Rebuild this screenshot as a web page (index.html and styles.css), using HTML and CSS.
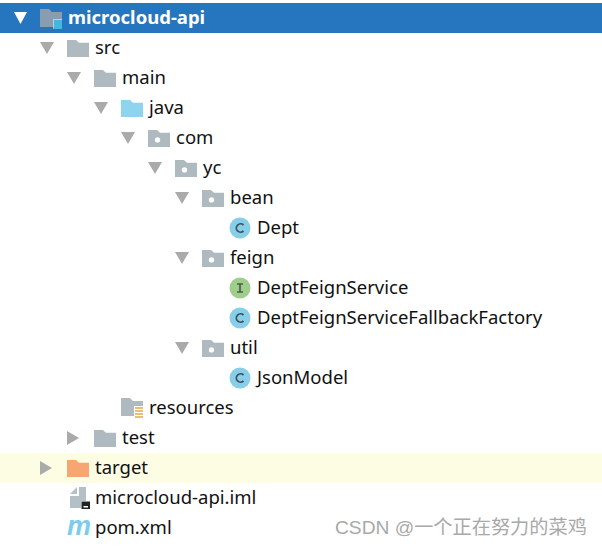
FILE: index.html
```html
<!DOCTYPE html>
<html lang="en">
<head>
<meta charset="utf-8">
<title>microcloud-api</title>
<link rel="stylesheet" href="styles.css">
</head>
<body>
<svg class="defs" aria-hidden="true">
  <symbol id="down" viewBox="0 0 14 12" preserveAspectRatio="none"><path d="M0 0H14L7 12Z"/></symbol>
  <symbol id="right" viewBox="0 0 12 14"><path d="M0 0V14L12 7Z"/></symbol>
  <symbol id="folder" viewBox="0 0 22 18" preserveAspectRatio="none"><path d="M0 0H9L12 3H22V18H0Z"/></symbol>
  <symbol id="package" viewBox="0 0 22 18" preserveAspectRatio="none"><path d="M0 0H9L12 3H22V18H0Z"/><circle cx="9.500" cy="10.500" r="2.700" fill="#fff"/></symbol>
  <symbol id="module" viewBox="0 0 22 20"><path fill="#8a9cb0" d="M0 0H9L12 3H22V18H0Z"/><rect x="13" y="10" width="9" height="10" fill="#fff" opacity=".5"/><rect x="14" y="11" width="9" height="9" fill="#45b5e2"/></symbol>
  <symbol id="res" viewBox="0 0 22 20"><path fill="#afb9c0" d="M0 0H9L12 3H22V18H0Z"/><rect x="13" y="8" width="9" height="12" fill="#fff"/><path fill="none" stroke="#e2a94e" stroke-width="1.6" d="M14 10H22M14 13H22M14 16H22M14 19H22"/></symbol>
  <symbol id="cls" viewBox="0 0 22 22"><circle cx="11" cy="11" r="10.500" fill="#87cfe9"/><path fill="none" stroke="#3f5060" stroke-width="1.8" d="M14.500 8A4.200 4.200 0 1 0 14.500 14"/></symbol>
  <symbol id="ifc" viewBox="0 0 22 22"><circle cx="11" cy="11" r="10.500" fill="#9fce8c"/><path fill="none" stroke="#4b5f45" stroke-width="1.7" d="M8 7H14M8 15H14M11 7V15"/></symbol>
  <symbol id="iml" viewBox="0 0 20 22"><path fill="#b4bfc6" d="M7 0V7H0Z"/><path fill="#b4bfc6" d="M9 0H16V21H0V9H9Z"/><rect x="11" y="14" width="9" height="9" fill="#fff"/><rect x="11.500" y="14.500" width="8.500" height="8.500" fill="#232323"/><rect x="13.500" y="19" width="4.500" height="1.500" fill="#fff"/></symbol>
</svg>

<main class="tree">
  <div class="row selected d0"><svg class="arrow"><use href="#down"/></svg><svg class="icon module"><use href="#module"/></svg><span class="label">microcloud-api</span></div>
  <div class="row d1"><svg class="arrow"><use href="#down"/></svg><svg class="icon gray"><use href="#folder"/></svg><span class="label">src</span></div>
  <div class="row d2"><svg class="arrow"><use href="#down"/></svg><svg class="icon gray"><use href="#folder"/></svg><span class="label">main</span></div>
  <div class="row d3"><svg class="arrow"><use href="#down"/></svg><svg class="icon blue"><use href="#folder"/></svg><span class="label">java</span></div>
  <div class="row d4"><svg class="arrow"><use href="#down"/></svg><svg class="icon gray"><use href="#package"/></svg><span class="label">com</span></div>
  <div class="row d5"><svg class="arrow"><use href="#down"/></svg><svg class="icon gray"><use href="#package"/></svg><span class="label">yc</span></div>
  <div class="row d6"><svg class="arrow"><use href="#down"/></svg><svg class="icon gray"><use href="#package"/></svg><span class="label">bean</span></div>
  <div class="row d7"><span class="arrow"></span><svg class="icon round"><use href="#cls"/></svg><span class="label">Dept</span></div>
  <div class="row d6"><svg class="arrow"><use href="#down"/></svg><svg class="icon gray"><use href="#package"/></svg><span class="label">feign</span></div>
  <div class="row d7"><span class="arrow"></span><svg class="icon round"><use href="#ifc"/></svg><span class="label">DeptFeignService</span></div>
  <div class="row d7"><span class="arrow"></span><svg class="icon round"><use href="#cls"/></svg><span class="label">DeptFeignServiceFallbackFactory</span></div>
  <div class="row d6"><svg class="arrow"><use href="#down"/></svg><svg class="icon gray"><use href="#package"/></svg><span class="label">util</span></div>
  <div class="row d7"><span class="arrow"></span><svg class="icon round"><use href="#cls"/></svg><span class="label">JsonModel</span></div>
  <div class="row d3"><span class="arrow"></span><svg class="icon resource"><use href="#res"/></svg><span class="label">resources</span></div>
  <div class="row d2"><svg class="arrow side"><use href="#right"/></svg><svg class="icon gray"><use href="#folder"/></svg><span class="label">test</span></div>
  <div class="row excluded d1"><svg class="arrow side"><use href="#right"/></svg><svg class="icon orange"><use href="#folder"/></svg><span class="label">target</span></div>
  <div class="row d1"><span class="arrow"></span><svg class="icon file"><use href="#iml"/></svg><span class="label">microcloud-api.iml</span></div>
  <div class="row d1"><span class="arrow"></span><span class="icon maven">m</span><span class="label">pom.xml</span></div>
</main>
<div class="watermark">CSDN @一个正在努力的菜鸡</div>
</body>
</html>
```
FILE: styles.css
```css
html, body {
  margin: 0;
  padding: 0;
  background: #fff;
}
body {
  position: relative;
  width: 602px;
  height: 546px;
  overflow: hidden;
  font-family: "Noto Sans", "Open Sans", sans-serif;
  font-size: 18.5px;
  color: #111;
}
.defs {
  position: absolute;
  width: 0;
  height: 0;
}
.tree {
  padding-top: 3px;
}
.row {
  display: flex;
  align-items: center;
  height: 30px;
  white-space: nowrap;
}
.d0 { padding-left: 14px; }
.d1 { padding-left: 40px; }
.d2 { padding-left: 67px; }
.d3 { padding-left: 94px; }
.d4 { padding-left: 121px; }
.d5 { padding-left: 148px; }
.d6 { padding-left: 175px; }
.d7 { padding-left: 202px; }
.arrow {
  flex: none;
  width: 14px;
  height: 12px;
  margin-right: 13px;
  fill: #aaa;
}
.arrow.side {
  width: 12px;
  height: 14px;
  margin-right: 15px;
}
.icon {
  flex: none;
  width: 22px;
  height: 17px;
  margin-right: 6px;
}
.gray { fill: #afb9c0; }
.blue { fill: #8ed4ee; }
.orange { fill: #f7a671; }
.round {
  height: 22px;
}
.module {
  height: 20px;
  margin-top: 2px;
}
.resource {
  height: 20px;
}
.file {
  width: 20px;
  height: 22px;
  margin-left: 3px;
  margin-right: 5px;
}
.maven {
  height: 24px;
  font-family: "Liberation Sans", sans-serif;
  font-size: 27px;
  font-weight: 700;
  font-style: italic;
  line-height: 21px;
  text-align: center;
  color: #7ccdec;
}
.label {
  margin-bottom: 2px;
  line-height: 28px;
}
.selected {
  background: #2675bf;
  color: #fff;
  font-weight: 700;
}
.selected .arrow {
  width: 13px;
  fill: #fff;
}
.excluded {
  background: #fdfde4;
}
.watermark {
  position: absolute;
  left: 335px;
  top: 516px;
  font-family: "Liberation Sans", "Noto Sans CJK SC", sans-serif;
  font-size: 19.2px;
  line-height: 24px;
  color: #a9a9a9;
  white-space: nowrap;
}
```
